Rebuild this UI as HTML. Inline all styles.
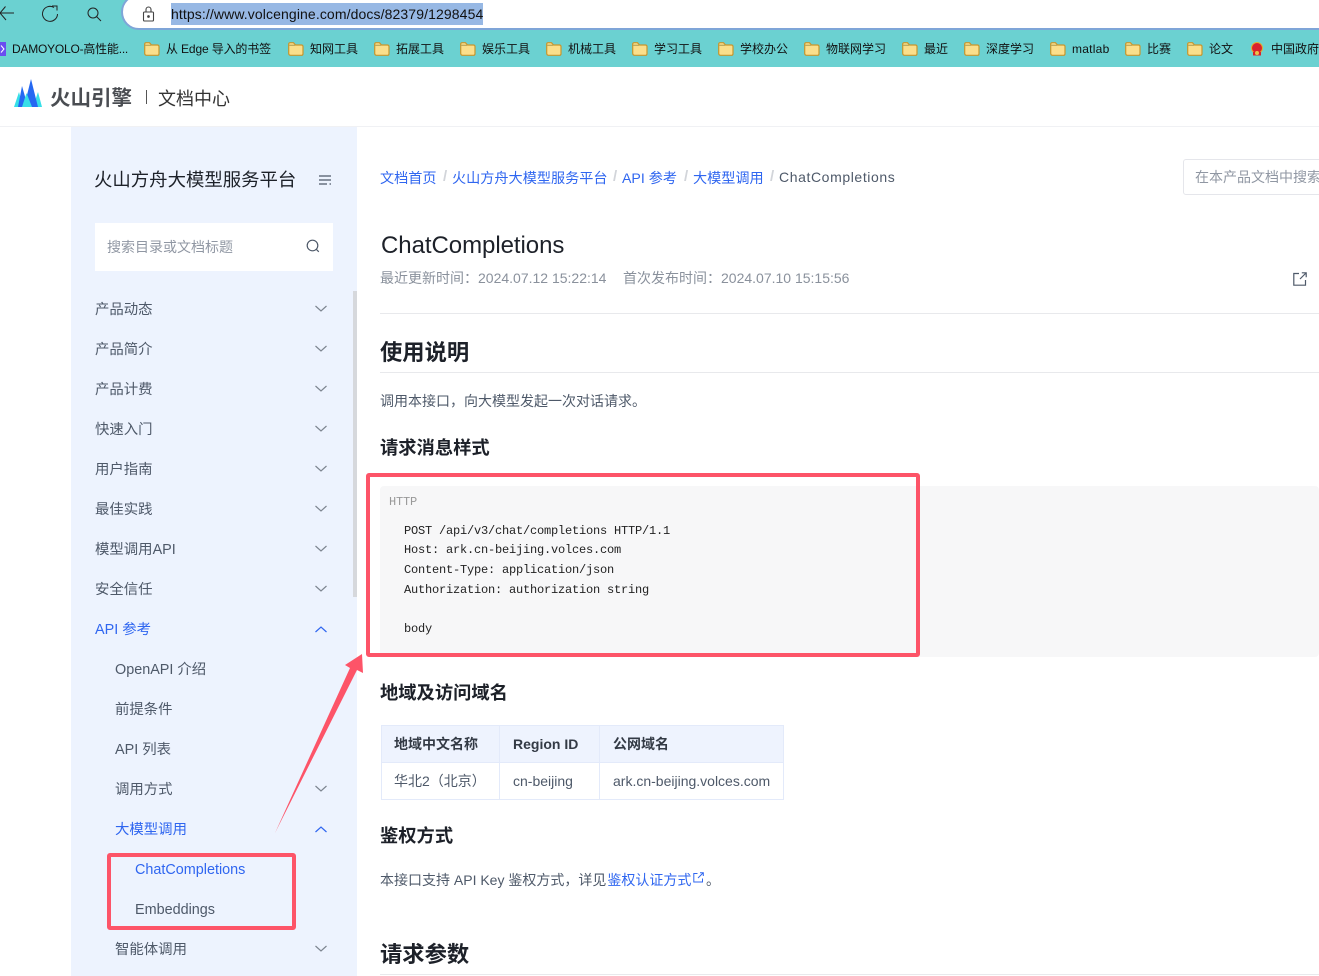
<!DOCTYPE html>
<html lang="zh-CN">
<head>
<meta charset="utf-8">
<title>ChatCompletions</title>
<style>
html,body{margin:0;padding:0;background:#fff}
body{width:1319px;height:976px;overflow:hidden;position:relative;font-family:"Liberation Sans","Noto Sans CJK SC",sans-serif}
.t{position:absolute;white-space:nowrap;line-height:20px}
.b{position:absolute}
.bm{font-size:12px;color:#111;top:39px}
.nav{font-size:14.400px;color:#4e5969;left:95px;margin-top:1px}
.sub{font-size:14.400px;color:#4e5969;left:115px;margin-top:1px}
.sub2{font-size:14.400px;color:#4e5969;left:135px;margin-top:1px}
.blue{color:#2f66f0}
.crumb{font-size:14.150px;top:168px}
.sep{font-size:15px;font-weight:700;top:167px;color:#d2d5da}
.h1{font-size:22.300px;font-weight:700;color:#1d2129;left:380px;line-height:30px}
.h2{font-size:18.300px;font-weight:700;color:#1d2129;left:380px;line-height:26px}
.p{font-size:14px;color:#4e5969}
.code{position:absolute;left:404px;font-family:"Liberation Mono","Noto Serif CJK SC",monospace;font-size:12px;letter-spacing:-.2px;color:#222;white-space:pre;line-height:20px}
svg{position:absolute;overflow:visible}
</style>
</head>
<body>
<!-- browser toolbar -->
<div class="b" style="left:0;top:0;width:1319px;height:67px;background:#6bd1d1"></div>
<div class="b" style="left:121px;top:-6px;width:1300px;height:32px;background:#fff;border:2px solid #7fa5d8;border-radius:18px"></div>
<svg style="left:0;top:0" width="120" height="28" fill="none" stroke="#222" stroke-width="1">
<path d="M14 13H0M5.500 6.500L0 13L6 20"/>
<path d="M57.500 14A7.500 7.500 0 1 1 54 7.500"/><path d="M52 6H57V10.500"/>
<circle cx="93" cy="13" r="5"/><path d="M96.500 16.500L101 21"/>
</svg>
<svg style="left:142px;top:6px" width="13" height="16" fill="none" stroke="#444" stroke-width="1.100">
<rect x="1.500" y="6" width="10" height="9" rx="1"/><path d="M4 6V3.500a2.500 2.500 0 0 1 5 0V6"/><circle cx="6.500" cy="10.500" r=".8" fill="#444"/>
</svg>
<div class="b" style="left:171px;top:3px;width:312px;height:22px;background:#97b8e4"></div>
<div class="t" style="left:171px;top:4px;font-size:14px;letter-spacing:.11px;color:#111">https://www.volcengine.com/docs/82379/1298454</div>

<!-- bookmarks -->
<div class="b" style="left:0;top:42px;width:6px;height:14px;background:#6a4df0"></div>
<svg style="left:0;top:45px" width="6" height="8" fill="none" stroke="#fff" stroke-width="1"><path d="M1 .5L4 4L1 7.500"/></svg>
<div class="t bm" style="left:12px;letter-spacing:-.22px">DAMOYOLO-高性能...</div>
<svg width="0" height="0" style="left:0;top:0"><defs>
<g id="f"><path d="M.7 3V2a1.300 1.300 0 0 1 1.300-1.300h3.500L7.500 3H13.500a1.500 1.500 0 0 1 1.500 1.500v7.500A1.500 1.500 0 0 1 13.500 13.300H2.500A1.800 1.800 0 0 1 .7 11.500z" fill="#fbdf8b" stroke="#c8962c" stroke-width="1.200"/><path d="M1 3.300H7" stroke="#b7a55a" stroke-width="1.200"/></g>
</defs></svg>
<svg style="left:144px;top:42px" width="16" height="14"><use href="#f"/></svg><div class="t bm" style="left:166px;letter-spacing:-.14px">从 Edge 导入的书签</div>
<svg style="left:288px;top:42px" width="16" height="14"><use href="#f"/></svg><div class="t bm" style="left:310px">知网工具</div>
<svg style="left:374px;top:42px" width="16" height="14"><use href="#f"/></svg><div class="t bm" style="left:396px">拓展工具</div>
<svg style="left:460px;top:42px" width="16" height="14"><use href="#f"/></svg><div class="t bm" style="left:482px">娱乐工具</div>
<svg style="left:546px;top:42px" width="16" height="14"><use href="#f"/></svg><div class="t bm" style="left:568px">机械工具</div>
<svg style="left:632px;top:42px" width="16" height="14"><use href="#f"/></svg><div class="t bm" style="left:654px">学习工具</div>
<svg style="left:718px;top:42px" width="16" height="14"><use href="#f"/></svg><div class="t bm" style="left:740px">学校办公</div>
<svg style="left:804px;top:42px" width="16" height="14"><use href="#f"/></svg><div class="t bm" style="left:826px">物联网学习</div>
<svg style="left:902px;top:42px" width="16" height="14"><use href="#f"/></svg><div class="t bm" style="left:924px">最近</div>
<svg style="left:964px;top:42px" width="16" height="14"><use href="#f"/></svg><div class="t bm" style="left:986px">深度学习</div>
<svg style="left:1050px;top:42px" width="16" height="14"><use href="#f"/></svg><div class="t bm" style="left:1072px;letter-spacing:.25px">matlab</div>
<svg style="left:1125px;top:42px" width="16" height="14"><use href="#f"/></svg><div class="t bm" style="left:1147px">比赛</div>
<svg style="left:1187px;top:42px" width="16" height="14"><use href="#f"/></svg><div class="t bm" style="left:1209px">论文</div>
<svg style="left:1250px;top:42px" width="14" height="14"><circle cx="7" cy="6" r="5.500" fill="#d9212c" stroke="#e0b030"/><rect x="3" y="10" width="8" height="3.500" fill="#d9212c"/><circle cx="7" cy="11" r="2" fill="#e9c24a"/></svg>
<div class="t bm" style="left:1271px">中国政府</div>

<!-- site header -->
<div class="b" style="left:0;top:126px;width:1319px;height:1px;background:#f0f1f4"></div>
<svg style="left:14px;top:78px" width="28" height="29">
<path d="M0 29L5 14L9 29z" fill="#37dfe8"/>
<path d="M28 29L24 14L19 29z" fill="#37dfe8"/>
<path d="M4 29L8 8L14 29z" fill="#2468f2"/>
<path d="M10 29L17 1L24 29z" fill="#2468f2"/>
<path d="M8 29L12.500 15L18 29z" fill="#37dfe8"/>
</svg>
<div class="t" style="left:50px;top:86px;font-size:20.500px;line-height:26px;font-weight:700;color:#4a4d52">火山引擎</div>
<div class="b" style="left:146px;top:90px;width:1px;height:14px;background:#555"></div>
<div class="t" style="left:158px;top:86px;font-size:18px;line-height:26px;color:#333">文档中心</div>

<!-- sidebar -->
<div class="b" style="left:71px;top:127px;width:286px;height:849px;background:#edf3fe"></div>
<div class="b" style="left:353px;top:291px;width:4px;height:306px;background:#d6d8dc"></div>
<div class="t" style="left:94px;top:167px;font-size:18.400px;line-height:26px;color:#1d2129">火山方舟大模型服务平台</div>
<svg style="left:319px;top:175px" width="13" height="11" fill="none" stroke="#4e5969" stroke-width="1.300"><path d="M0 1H12M0 5H12M0 9H8M10.500 9H12"/></svg>
<div class="b" style="left:95px;top:223px;width:238px;height:48px;background:#fff"></div>
<div class="t" style="left:107px;top:237px;font-size:14px;color:#9097a3">搜索目录或文档标题</div>
<svg style="left:306px;top:239px" width="14" height="14" fill="none" stroke="#4e5969" stroke-width="1.200"><circle cx="6.500" cy="6.500" r="5.300"/><path d="M10.300 10.300L12.800 12.800"/></svg>

<div class="t nav" style="top:299px">产品动态</div>
<div class="t nav" style="top:339px">产品简介</div>
<div class="t nav" style="top:379px">产品计费</div>
<div class="t nav" style="top:419px">快速入门</div>
<div class="t nav" style="top:459px">用户指南</div>
<div class="t nav" style="top:499px">最佳实践</div>
<div class="t nav" style="top:539px">模型调用API</div>
<div class="t nav" style="top:579px">安全信任</div>
<div class="t nav blue" style="top:619px">API 参考</div>
<div class="t sub" style="top:659px">OpenAPI 介绍</div>
<div class="t sub" style="top:699px">前提条件</div>
<div class="t sub" style="top:739px">API 列表</div>
<div class="t sub" style="top:779px">调用方式</div>
<div class="t sub blue" style="top:819px">大模型调用</div>
<div class="t sub2 blue" style="top:859px">ChatCompletions</div>
<div class="t sub2" style="top:899px">Embeddings</div>
<div class="t sub" style="top:939px">智能体调用</div>

<svg style="left:315px;top:300px" width="12" height="660" fill="none" stroke="#7d8590" stroke-width="1.200">
<path d="M.5 6L6 11L11.500 6M.5 46L6 51L11.500 46M.5 86L6 91L11.500 86M.5 126L6 131L11.500 126M.5 166L6 171L11.500 166M.5 206L6 211L11.500 206M.5 246L6 251L11.500 246M.5 286L6 291L11.500 286M.5 486L6 491L11.500 486M.5 646L6 651L11.500 646"/>
<path d="M.5 332L6 327L11.500 332M.5 532L6 527L11.500 532" stroke="#2f66f0"/>
</svg>

<!-- main -->
<div class="t crumb blue" style="left:380px">文档首页</div>
<div class="t sep" style="left:443px">/</div>
<div class="t crumb blue" style="left:452px">火山方舟大模型服务平台</div>
<div class="t sep" style="left:613px">/</div>
<div class="t crumb blue" style="left:622px">API 参考</div>
<div class="t sep" style="left:684px">/</div>
<div class="t crumb blue" style="left:693px">大模型调用</div>
<div class="t sep" style="left:770px">/</div>
<div class="t" style="left:779px;top:167px;font-size:14px;letter-spacing:.6px;color:#4e5969">ChatCompletions</div>

<div class="b" style="left:1183px;top:159px;width:160px;height:34px;border:1px solid #e5e6eb;border-radius:3px"></div>
<div class="t" style="left:1195px;top:167px;font-size:14px;color:#9097a3">在本产品文档中搜索</div>

<div class="t" style="left:381px;top:231px;font-size:24px;line-height:30px;letter-spacing:-.05px;color:#1d2129">ChatCompletions</div>
<div class="t" style="left:380px;top:268px;font-size:14px;color:#8a919c">最近更新时间：2024.07.12 15:22:14</div>
<div class="t" style="left:623px;top:268px;font-size:14px;color:#8a919c">首次发布时间：2024.07.10 15:15:56</div>
<svg style="left:1293px;top:272px" width="14" height="14" fill="none" stroke="#4e5969" stroke-width="1.200"><path d="M6 1.500H.8V13.200H12.500V8M7 7L13 1M8.800 .8H13.200V5.200"/></svg>
<div class="b" style="left:380px;top:313px;width:939px;height:1px;background:#e8e9ec"></div>

<div class="t h1" style="top:338px">使用说明</div>
<div class="b" style="left:380px;top:372px;width:939px;height:1px;background:#e8e9ec"></div>
<div class="t p" style="left:380px;top:391px">调用本接口，向大模型发起一次对话请求。</div>
<div class="t h2" style="top:435px">请求消息样式</div>

<div class="b" style="left:380px;top:486px;width:939px;height:171px;background:#f7f7f8;border-radius:4px"></div>
<div class="code" style="left:389px;top:492px;color:#999">HTTP</div>
<div class="code" style="top:521px">POST /api/v3/chat/completions HTTP/1.1</div>
<div class="code" style="top:540px">Host: ark.cn-beijing.volces.com</div>
<div class="code" style="top:560px">Content-Type: application/json</div>
<div class="code" style="top:580px">Authorization: authorization string</div>
<div class="code" style="top:619px">body</div>

<div class="t h2" style="top:680px">地域及访问域名</div>

<!-- table -->
<div class="b" style="left:381px;top:725px;width:403px;height:75px;border:1px solid #e3eafa;box-sizing:border-box;background:#fff"></div>
<div class="b" style="left:381px;top:725px;width:403px;height:38px;background:#eef3fe;border:1px solid #e3eafa;box-sizing:border-box"></div>
<div class="b" style="left:499px;top:725px;width:1px;height:75px;background:#e3eafa"></div>
<div class="b" style="left:599px;top:725px;width:1px;height:75px;background:#e3eafa"></div>
<div class="t" style="left:394px;top:734px;font-size:14px;font-weight:700;color:#333a45">地域中文名称</div>
<div class="t" style="left:513px;top:734px;font-size:14px;font-weight:700;color:#333a45">Region ID</div>
<div class="t" style="left:613px;top:734px;font-size:14px;font-weight:700;color:#333a45">公网域名</div>
<div class="t p" style="left:394px;top:771px">华北2（北京）</div>
<div class="t p" style="left:513px;top:771px">cn-beijing</div>
<div class="t p" style="left:613px;top:771px">ark.cn-beijing.volces.com</div>

<div class="t h2" style="top:823px">鉴权方式</div>
<div class="t p" style="left:380px;top:870px">本接口支持 API Key 鉴权方式，详见<span class="blue" style="margin-left:1px">鉴权认证方式</span></div>
<svg style="left:693px;top:872px" width="11" height="11" fill="none" stroke="#2f66f0" stroke-width="1"><path d="M4.500 1.500H.8V10H9.500V6.500M5 6L10 1M7 .7H10.300V4"/></svg>
<div class="t p" style="left:706px;top:870px">。</div>

<div class="t h1" style="top:940px">请求参数</div>
<div class="b" style="left:380px;top:974px;width:939px;height:1px;background:#e8e9ec"></div>

<!-- annotations -->
<div class="b" style="left:366px;top:473px;width:554px;height:184px;box-sizing:border-box;border:4px solid #fd5468;border-radius:3px"></div>
<div class="b" style="left:107px;top:853px;width:189px;height:77px;box-sizing:border-box;border:4px solid #fd5468;border-radius:3px"></div>
<svg style="left:0;top:0" width="1319" height="976"><path d="M275 833L350 668L345 665L362 654L363 673L357 670z" fill="#fd5468"/></svg>
</body>
</html>
